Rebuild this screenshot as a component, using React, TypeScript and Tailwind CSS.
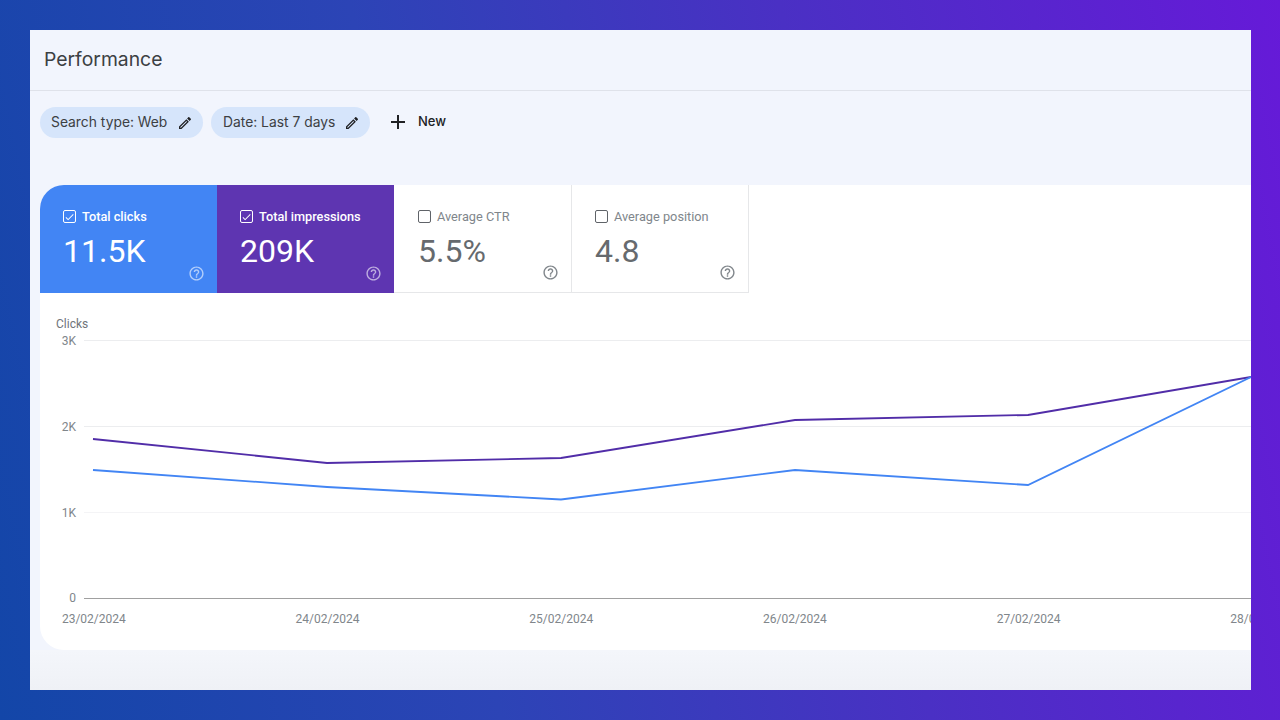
import { MdAdd, MdCheck, MdHelpOutline, MdOutlineEdit } from "react-icons/md";

const tiles = [
  { label: "Total clicks", value: "11.5K", on: true, bg: "w-[177px] pl-[23px] bg-[#4285f4] rounded-tl-[24px]" },
  { label: "Total impressions", value: "209K", on: true, bg: "w-[177px] pl-[23px] bg-[#5e35b1]" },
  { label: "Average CTR", value: "5.5%", on: false, bg: "w-[178px] pl-[24px] bg-white border-r border-b border-[#e6e7e9]" },
  { label: "Average position", value: "4.8", on: false, bg: "w-[177px] pl-[23px] bg-white border-r border-b border-[#e6e7e9]" },
];

const yTicks = [
  { label: "3K", line: "bg-[#ecedef]" },
  { label: "2K", line: "bg-[#ecedef]" },
  { label: "1K", line: "bg-[#f4f4f6]" },
];

const dates = ["23/02/2024", "24/02/2024", "25/02/2024", "26/02/2024", "27/02/2024", "28/02/2024"];

function Chip({ label, className }: { label: string; className: string }) {
  return (
    <div className={`flex h-[31px] items-center justify-between rounded-full bg-[#d6e5fb] pr-[10px] font-['Inter',sans-serif] text-[13.85px] text-[#3c4043] ${className}`}>
      <span>{label}</span>
      <MdOutlineEdit size={16} className="text-[#202124]" />
    </div>
  );
}

function Tile({ label, value, on, bg }: (typeof tiles)[number]) {
  return (
    <div className={`relative h-[108px] pt-[24px] ${bg} ${on ? "text-white" : "text-[#666a6e]"}`}>
      <div className="flex h-[15px] items-center gap-[6px]">
        <span className={`flex h-[13px] w-[13px] items-center justify-center rounded-[2px] border ${on ? "border-white" : "border-[#5f6368]"}`}>
          {on && <MdCheck size={12} />}
        </span>
        <span className={`text-[12.75px] ${on ? "font-medium" : "text-[#80868b]"}`}>{label}</span>
      </div>
      <div className="mt-[8px] text-[32px] leading-[38px]">{value}</div>
      <MdHelpOutline size={17} className={`absolute bottom-[11px] right-[12px] ${on ? "text-white/60" : "text-[#80868b]"}`} />
    </div>
  );
}

function Chart() {
  return (
    <div className="relative pl-[16px] pt-[23px] text-[#80868b]">
      <div className="h-[16px] text-[12px] leading-[16px] text-[#70757a]">Clicks</div>
      <div className="mt-[8px]">
        {yTicks.map((t) => (
          <div key={t.label} className="flex h-[86px] items-start gap-[8px]">
            <span className="-mt-[7px] w-[20px] text-right text-[12px] leading-[16px]">{t.label}</span>
            <div className={`h-px flex-1 ${t.line}`} />
          </div>
        ))}
        <div className="flex h-[12px] items-start gap-[8px]">
          <span className="-mt-[8px] w-[20px] text-right text-[12px] leading-[16px]">0</span>
          <div className="h-px flex-1 bg-[#a0a0a0]" />
        </div>
      </div>
      <div className="-ml-[79px] mt-[1px] flex w-[1400px] text-[12px] leading-[16px]">
        {dates.map((d) => (
          <span key={d} className="w-[233.7px] shrink-0 text-center">{d}</span>
        ))}
      </div>
      <svg className="absolute left-0 top-0 h-[360px] w-[1211px]" viewBox="0 0 1211 360" fill="none">
        <polyline points="53,146 287,170 521,165 755,127 988,122 1211,84" stroke="#512da8" strokeWidth="1.8" />
        <polyline points="53,177 287,194 521,206.5 755,177 988,192 1211,84" stroke="#4285f4" strokeWidth="1.8" />
      </svg>
    </div>
  );
}

export default function App() {
  return (
    <div className="h-[720px] w-[1280px] overflow-hidden bg-[linear-gradient(78deg,#1346a8_0%,#2c44b6_35%,#4a30c4_65%,#661ad8_100%)] pl-[30px] pt-[30px] font-['Roboto',sans-serif]">
      <div className="flex h-[660px] w-[1221px] flex-col overflow-hidden bg-[#f2f5fd]">
        <div className="h-[61px] shrink-0 border-b border-[#dfe2ea] pl-[14px] pt-[15px] font-['Inter',sans-serif] text-[19.35px] leading-[28px] text-[#3c4043]">
          Performance
        </div>
        <div className="flex h-[94px] shrink-0 items-start gap-[8px] pl-[10px] pt-[16px]">
          <Chip label="Search type: Web" className="w-[163px] pl-[11px]" />
          <Chip label="Date: Last 7 days" className="w-[159px] pl-[12px]" />
          <div className="ml-[8px] flex h-[30px] items-center gap-[8px] text-[#202124]">
            <MdAdd size={24} />
            <span className="-mt-[1px] font-['Inter',sans-serif] text-[13px] font-medium">New</span>
          </div>
        </div>
        <div className="ml-[10px] h-[465px] shrink-0 rounded-l-[24px] bg-white">
          <div className="flex">
            {tiles.map((t) => (
              <Tile key={t.label} {...t} />
            ))}
          </div>
          <Chart />
        </div>
        <div className="flex-1 bg-[linear-gradient(180deg,#f4f6fb,#eff1f6)]" />
      </div>
    </div>
  );
}
